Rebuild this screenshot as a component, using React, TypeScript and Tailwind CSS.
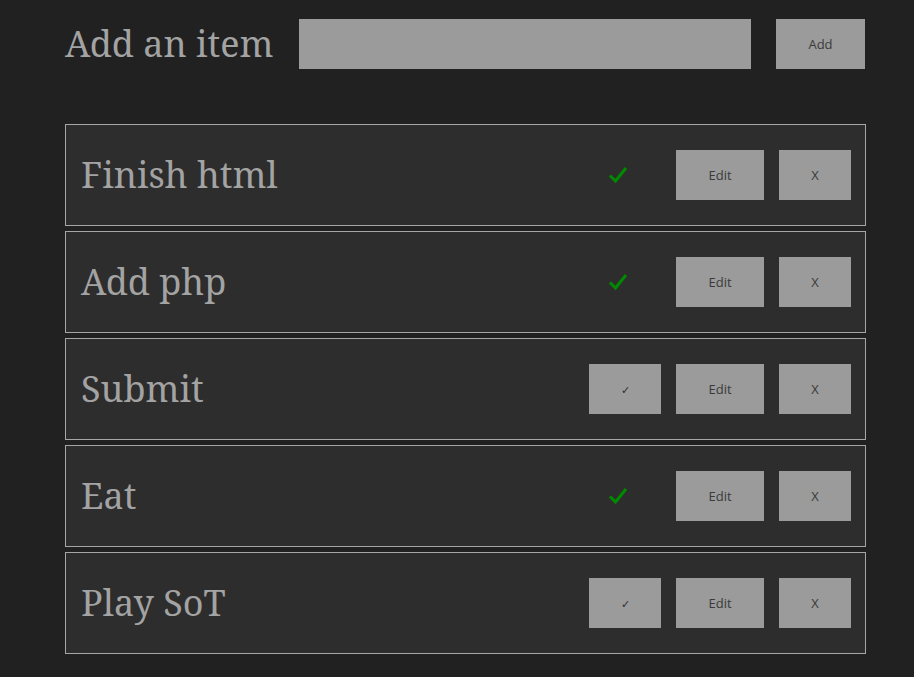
import { useState } from "react";

interface Item {
  id: number;
  name: string;
  done: boolean;
}

const initialItems: Item[] = [
  { id: 1, name: "Finish html", done: true },
  { id: 2, name: "Add php", done: true },
  { id: 3, name: "Submit", done: false },
  { id: 4, name: "Eat", done: true },
  { id: 5, name: "Play SoT", done: false },
];

const serif = "font-['Noto_Serif','DejaVu_Serif',serif]";
const sans = "font-['Open_Sans','Noto_Sans',sans-serif]";

export default function App() {
  const [items, setItems] = useState<Item[]>(initialItems);
  const [text, setText] = useState("");

  const addItem = () => {
    if (!text.trim()) return;
    setItems([...items, { id: Date.now(), name: text, done: false }]);
    setText("");
  };

  return (
    <div className="min-h-[677px] bg-[#212121] pt-[19px] pb-6">
      <div className="ml-[65px] w-[801px]">
        {/* Header */}
        <div className="flex items-center h-[50px]">
          <h1 className={`${serif} w-[234px] text-[36px] leading-none text-[#a3a3a3]`}>
            Add an item
          </h1>
          <input
            value={text}
            onChange={(e) => setText(e.target.value)}
            className="h-[50px] w-[452px] bg-[#9b9b9b] outline-none px-2"
          />
          <button
            onClick={addItem}
            className={`${sans} ml-[25px] h-[50px] w-[89px] bg-[#9b9b9b] pt-[2px] text-[13px] text-[#3a3a3a]`}
          >
            Add
          </button>
        </div>

        {/* List */}
        <div className="mt-[55px] flex flex-col gap-[5px]">
          {items.map((item) => (
            <div
              key={item.id}
              className="flex items-center h-[102px] border border-[#a6a6a6] bg-[#2d2d2d] pl-[15px] pr-[14px]"
            >
              <span className={`${serif} flex-1 pb-[1px] text-[36px] leading-none text-[#a3a3a3]`}>
                {item.name}
              </span>
              {item.done ? (
                <span className="w-[72px] flex justify-center pr-[14px]">
                  <svg width="20" height="18" viewBox="0 0 20 18">
                    <path
                      d="M2 9.5 L7.5 15 L18 2"
                      fill="none"
                      stroke="#008a00"
                      strokeWidth="3"
                    />
                  </svg>
                </span>
              ) : (
                <button
                  onClick={() =>
                    setItems(items.map((i) => (i.id === item.id ? { ...i, done: true } : i)))
                  }
                  className={`${sans} h-[50px] w-[72px] bg-[#9b9b9b] pt-[2px] text-[11px] text-[#2e2e2e]`}
                >
                  ✓
                </button>
              )}
              <button className={`${sans} ml-[15px] h-[50px] w-[88px] bg-[#9b9b9b] pt-[2px] text-[13px] text-[#3a3a3a]`}>
                Edit
              </button>
              <button
                onClick={() => setItems(items.filter((i) => i.id !== item.id))}
                className={`${sans} ml-[15px] h-[50px] w-[72px] bg-[#9b9b9b] pt-[2px] text-[13px] text-[#3a3a3a]`}
              >
                X
              </button>
            </div>
          ))}
        </div>
      </div>
    </div>
  );
}
